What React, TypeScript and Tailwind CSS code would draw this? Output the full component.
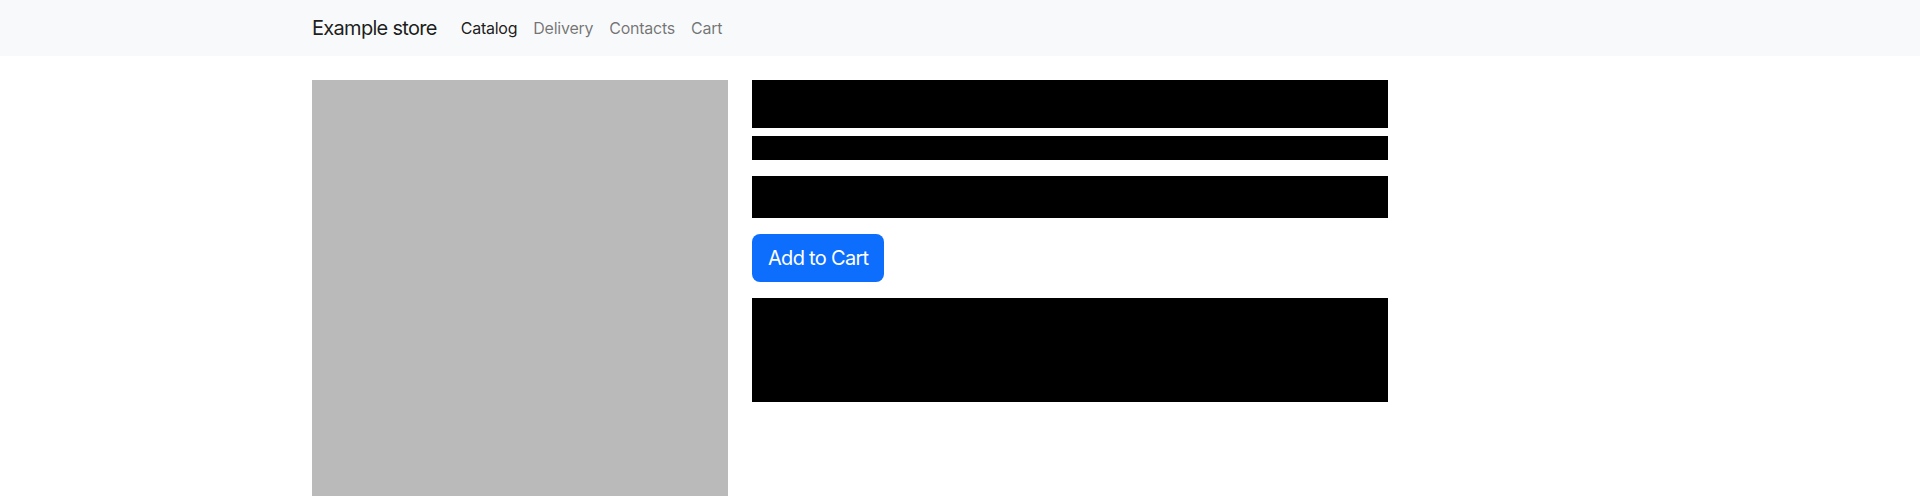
import React from "react";

const links = [
  { label: "Catalog", active: true },
  { label: "Delivery", active: false },
  { label: "Contacts", active: false },
  { label: "Cart", active: false },
];

export default function App() {
  return (
    <div className="min-h-screen bg-white font-['Inter',_'Noto_Sans',_sans-serif] text-[#212529]">
      {/* Navbar */}
      <nav className="bg-[#f8f9fa] h-[56px]">
        <div className="w-[1320px] mx-auto px-3 h-full flex items-center">
          <a className="text-[20px] leading-[30px] tracking-[-0.035em] text-black/90 mr-4">
            Example store
          </a>
          <ul className="flex items-center">
            {links.map((l) => (
              <li key={l.label}>
                <a
                  className={`block px-2 py-2 text-[16px] leading-6 tracking-[-0.015em] ${
                    l.active ? "text-black/90" : "text-black/55"
                  }`}
                >
                  {l.label}
                </a>
              </li>
            ))}
          </ul>
        </div>
      </nav>

      {/* Product */}
      <main className="w-[1320px] mx-auto px-3 mt-6">
        <div className="flex gap-6">
          <div className="w-[416px] h-[416px] bg-[#bababa] shrink-0" />
          <div className="w-[636px] flex flex-col">
            <div className="h-[48px] bg-black" />
            <div className="h-[24px] bg-black mt-2" />
            <div className="h-[42px] bg-black mt-4" />
            <div className="mt-4">
              <button className="h-[48px] px-4 rounded-lg bg-[#0d6efd] text-white text-[20px] leading-[30px] tracking-[-0.035em]">
                Add to Cart
              </button>
            </div>
            <div className="h-[104px] bg-black mt-4" />
          </div>
        </div>
      </main>
    </div>
  );
}
